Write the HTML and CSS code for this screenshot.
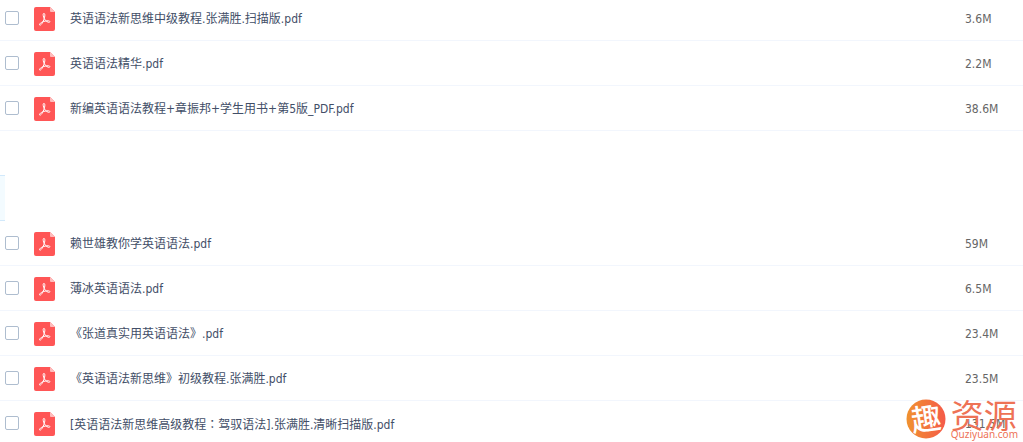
FILE: index.html
```html
<!DOCTYPE html>
<html lang="zh-CN">
<head>
    <meta charset="UTF-8">
    <meta name="viewport" content="width=device-width, initial-scale=1.0">
    <title>文件列表</title>
    <link rel="stylesheet" href="styles.css">
</head>
<body>
    <!-- 文件图标 -->
    <svg class="icon-defs" aria-hidden="true">
        <symbol id="icon-pdf" viewBox="0 0 21 24">
            <path d="M2 0h14l5 5v17a2 2 0 0 1-2 2H2a2 2 0 0 1-2-2V2a2 2 0 0 1 2-2z" fill="#ff5656"/>
            <path d="M16 0l5 5h-4a1 1 0 0 1-1-1z" fill="#ffbcbc"/>
            <path d="M9.600 6.500c1.300-.4 1.500 1.300 1 3.600-.8 3.600-2.900 7.700-4.400 8-1.300.2-.8-1.500 1.200-2.600 2.200-1.200 5-1.900 7.200-1.700 1.900.3 1.600 1.900-.1 1.500-2.100-.5-4.200-2.800-4.900-5.200-.5-1.900-.7-3.300 0-3.600z" fill="none" stroke="#fff" stroke-width="1" stroke-linejoin="round"/>
        </symbol>
    </svg>

    <main class="file-panel">
        <table class="file-list">
            <tbody>
                <tr>
                    <td class="col-check"><input type="checkbox" id="f1"></td>
                    <td class="col-icon"><svg class="file-icon"><use href="#icon-pdf"/></svg></td>
                    <td class="col-name"><label for="f1">英语语法新思维中级教程.张满胜.扫描版.pdf</label></td>
                    <td class="col-size">3.6M</td>
                </tr>
                <tr>
                    <td class="col-check"><input type="checkbox" id="f2"></td>
                    <td class="col-icon"><svg class="file-icon"><use href="#icon-pdf"/></svg></td>
                    <td class="col-name"><label for="f2">英语语法精华.pdf</label></td>
                    <td class="col-size">2.2M</td>
                </tr>
                <tr>
                    <td class="col-check"><input type="checkbox" id="f3"></td>
                    <td class="col-icon"><svg class="file-icon"><use href="#icon-pdf"/></svg></td>
                    <td class="col-name"><label for="f3">新编英语语法教程+章振邦+学生用书+第5版_PDF.pdf</label></td>
                    <td class="col-size">38.6M</td>
                </tr>
                <tr class="row-blank">
                    <td colspan="4"></td>
                </tr>
                <tr class="row-marker">
                    <td colspan="4"><div class="marker"></div></td>
                </tr>
                <tr>
                    <td class="col-check"><input type="checkbox" id="f4"></td>
                    <td class="col-icon"><svg class="file-icon"><use href="#icon-pdf"/></svg></td>
                    <td class="col-name"><label for="f4">赖世雄教你学英语语法.pdf</label></td>
                    <td class="col-size">59M</td>
                </tr>
                <tr>
                    <td class="col-check"><input type="checkbox" id="f5"></td>
                    <td class="col-icon"><svg class="file-icon"><use href="#icon-pdf"/></svg></td>
                    <td class="col-name"><label for="f5">薄冰英语语法.pdf</label></td>
                    <td class="col-size">6.5M</td>
                </tr>
                <tr>
                    <td class="col-check"><input type="checkbox" id="f6"></td>
                    <td class="col-icon"><svg class="file-icon"><use href="#icon-pdf"/></svg></td>
                    <td class="col-name"><label for="f6">《张道真实用英语语法》.pdf</label></td>
                    <td class="col-size">23.4M</td>
                </tr>
                <tr>
                    <td class="col-check"><input type="checkbox" id="f7"></td>
                    <td class="col-icon"><svg class="file-icon"><use href="#icon-pdf"/></svg></td>
                    <td class="col-name"><label for="f7">《英语语法新思维》初级教程.张满胜.pdf</label></td>
                    <td class="col-size">23.5M</td>
                </tr>
                <tr>
                    <td class="col-check"><input type="checkbox" id="f8"></td>
                    <td class="col-icon"><svg class="file-icon"><use href="#icon-pdf"/></svg></td>
                    <td class="col-name"><label for="f8">[英语语法新思维高级教程<span class="colon" lang="zh-TW">：</span>驾驭语法].张满胜.清晰扫描版.pdf</label></td>
                    <td class="col-size">131.5M</td>
                </tr>
            </tbody>
        </table>

        <!-- 水印 -->
        <div class="watermark">
            <svg class="watermark-logo" viewBox="0 0 40 40" aria-hidden="true">
                <defs>
                    <linearGradient id="logo-fill" x1="0" y1="0" x2="1" y2="0">
                        <stop offset="0" stop-color="#f0922f"/>
                        <stop offset="1" stop-color="#f55a49"/>
                    </linearGradient>
                </defs>
                <circle cx="20" cy="20" r="19.500" fill="url(#logo-fill)"/>
                <text class="logo-char" x="20" y="31" text-anchor="middle" transform="rotate(-8 20 20)">趣</text>
            </svg>
            <div class="watermark-text">
                <span class="watermark-name">资源</span>
                <span class="watermark-url">Quziyuan.com</span>
            </div>
        </div>
    </main>
</body>
</html>
```
FILE: styles.css
```css
* {
    box-sizing: border-box;
}

body {
    margin: 0;
    background-color: #fff;
    font-family: "DejaVu Sans Condensed", "Noto Sans CJK SC", sans-serif;
    font-size: 12px;
    color: #424e67;
}

.icon-defs {
    position: absolute;
    width: 0;
    height: 0;
}

.file-panel {
    position: relative;
    height: 100vh;
    overflow: hidden;
}

/* 文件列表 */
.file-list {
    width: 100%;
    margin-top: -4px;
    table-layout: fixed;
    border-collapse: separate;
    border-spacing: 0;
}

.file-list td {
    height: 45px;
    padding: 0;
    border-bottom: 1px solid #f2f6fd;
    line-height: 20px;
    vertical-align: middle;
}

.file-list .col-check {
    width: 34px;
    padding-left: 5px;
}

.file-list .col-icon {
    width: 36px;
}

.file-list .col-name,
.file-list .col-size {
    padding-top: 2px;
}

.file-list .col-size {
    width: 58px;
    color: #666;
}

.col-check input {
    display: block;
    appearance: none;
    width: 14px;
    height: 14px;
    margin: 0;
    border: 1px solid #aebdcf;
    border-radius: 2px;
    background-color: #fff;
}

.file-icon {
    display: block;
    width: 21px;
    height: 24px;
    margin-top: 2px;
}

.colon {
    font-family: "Noto Sans CJK TC", sans-serif;
}

/* 空白行 */
.file-list .row-blank td {
    height: 44px;
    border-bottom: 0;
}

.file-list .row-marker td {
    height: 46px;
    border-bottom: 0;
}

.marker {
    width: 5px;
    height: 46px;
    background-color: #f3fbff;
    border-top: 1px solid #d2e9fb;
    border-bottom: 1px solid #d2e9fb;
}

/* 水印 */
.watermark {
    position: absolute;
    right: 5px;
    bottom: 3px;
    display: flex;
    align-items: center;
    gap: 5px;
    color: #ee7256;
}

.watermark-logo {
    width: 40px;
    height: 40px;
}

.logo-char {
    font-family: "Noto Sans CJK SC", sans-serif;
    font-size: 30px;
    font-weight: 500;
    fill: #fff;
}

.watermark-text {
    display: flex;
    flex-direction: column;
}

.watermark-name {
    font-family: "Noto Sans CJK SC", sans-serif;
    font-size: 33px;
    line-height: 30px;
}

.watermark-url {
    font-family: "Noto Sans", sans-serif;
    font-size: 10px;
    line-height: 10px;
}
```
